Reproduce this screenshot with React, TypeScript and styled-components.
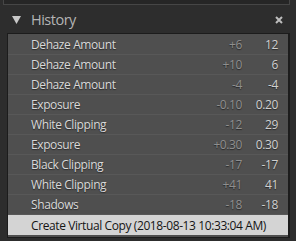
import React, { FunctionComponent } from 'react';
import styled, { createGlobalStyle } from 'styled-components';

const GlobalStyle = createGlobalStyle`
    html, body {
        margin: 0;
        padding: 0;
        background: #2b2b2b;
    }
`;

type Steg = { navn: string; endring?: string; verdi?: string };

const historikk: Steg[] = [
    { navn: 'Dehaze Amount', endring: '+6', verdi: '12' },
    { navn: 'Dehaze Amount', endring: '+10', verdi: '6' },
    { navn: 'Dehaze Amount', endring: '-4', verdi: '-4' },
    { navn: 'Exposure', endring: '-0.10', verdi: '0.20' },
    { navn: 'White Clipping', endring: '-12', verdi: '29' },
    { navn: 'Exposure', endring: '+0.30', verdi: '0.30' },
    { navn: 'Black Clipping', endring: '-17', verdi: '-17' },
    { navn: 'White Clipping', endring: '+41', verdi: '41' },
    { navn: 'Shadows', endring: '-18', verdi: '-18' },
];

const Side = styled.div`
    width: 296px;
    height: 241px;
    background: #2d2d2d;
    font-family: 'Open Sans', 'Liberation Sans', sans-serif;
    overflow: hidden;
    display: flex;
    flex-direction: column;
`;

const ForrigePanel = styled.div`
    height: 4px;
    margin: 0 6px 0 3px;
    background: #262626;
    border: 1px solid #464646;
    border-top: none;
`;

const Hode = styled.div`
    height: 28px;
    display: flex;
    align-items: center;
    padding: 1px 13px 0 12px;
    box-sizing: border-box;
`;

const Trekant = styled.svg`
    width: 9px;
    height: 8px;
    margin-right: 10px;
`;

const Tittel = styled.div`
    flex: 1;
    color: #b4b4b4;
    font-size: 14.5px;
    letter-spacing: -0.5px;
`;

const Lukk = styled.svg`
    width: 8px;
    height: 8px;
`;

const Panel = styled.div`
    margin: 0 6px 0 7px;
    background: #4f4f4f;
    border: 1px solid #1c1c1c;
    border-right: 2px solid #1c1c1c;
    padding: 1px 0 2px 0;
    display: flex;
    flex-direction: column;
`;

const Rad = styled.div<{ $valgt?: boolean }>`
    height: 20px;
    display: grid;
    grid-template-columns: 1fr 50px 36px;
    align-items: center;
    padding: 0 10px 0 23px;
    font-size: 12px;
    letter-spacing: -0.4px;
    background: ${(p) => (p.$valgt ? '#d4d4d4' : 'transparent')};
    border-bottom: ${(p) => (p.$valgt ? 'none' : '1px solid #585858')};
    box-sizing: border-box;
    color: ${(p) => (p.$valgt ? '#141414' : '#d9d9d9')};
    text-shadow: ${(p) => (p.$valgt ? 'none' : '0 1px 1px #2a2a2a')};
    white-space: nowrap;
`;

const Navn = styled.span`
    overflow: visible;
`;

const Tall = styled.span<{ $dempet?: boolean }>`
    text-align: right;
    color: ${(p) => (p.$dempet ? '#8f8f8f' : '#d0d0d0')};
`;

const App: FunctionComponent = () => (
    <Side>
        <GlobalStyle />
        <ForrigePanel />
        <Hode>
            <Trekant viewBox="0 0 9 8">
                <polygon points="0,0 9,0 4.5,8" fill="#c8c8c8" />
            </Trekant>
            <Tittel>History</Tittel>
            <Lukk viewBox="0 0 8 8">
                <path d="M1 1 L7 7 M7 1 L1 7" stroke="#bdbdbd" strokeWidth="2" />
            </Lukk>
        </Hode>
        <Panel>
            {historikk.map((steg, i) => (
                <Rad key={i}>
                    <Navn>{steg.navn}</Navn>
                    <Tall $dempet>{steg.endring}</Tall>
                    <Tall>{steg.verdi}</Tall>
                </Rad>
            ))}
            <Rad $valgt>
                <Navn>Create Virtual Copy (2018-08-13 10:33:04 AM)</Navn>
            </Rad>
        </Panel>
    </Side>
);

export default App;
